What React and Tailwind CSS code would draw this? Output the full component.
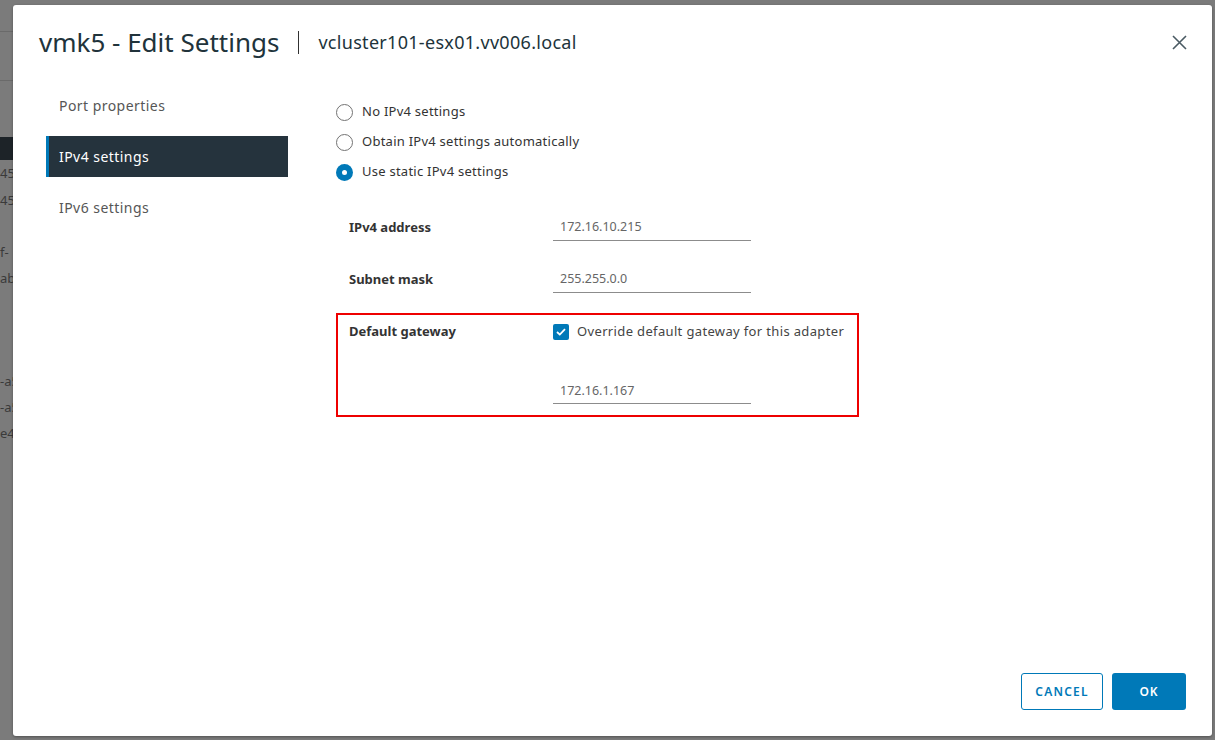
import { useState } from 'react';

const FONT = { fontFamily: '"Noto Sans", "Open Sans", Arial, sans-serif' };

const NAV = ['Port properties', 'IPv4 settings', 'IPv6 settings'];

const MODES = [
  { id: 'none', label: 'No IPv4 settings' },
  { id: 'dhcp', label: 'Obtain IPv4 settings automatically' },
  { id: 'static', label: 'Use static IPv4 settings' },
];

// rows of the host page that peek out from under the modal backdrop
const BEHIND = [
  { h: 'h-[31px]', text: '' },
  { h: 'h-[49px] border-t border-[#6a6a6a]', text: '' },
  { h: 'h-[57px] border-t border-[#6a6a6a]', text: '' },
  { h: 'h-[23px] bg-[#1d2328]', text: '' },
  { h: 'h-[27px]', text: '45' },
  { h: 'h-[27px]', text: '45' },
  { h: 'h-[26px]', text: '' },
  { h: 'h-[26px]', text: 'f-' },
  { h: 'h-[26px]', text: 'ab' },
  { h: 'h-[77px]', text: '' },
  { h: 'h-[26px]', text: '-a5' },
  { h: 'h-[26px]', text: '-a5' },
  { h: 'h-[26px]', text: 'e4' },
];

function Radio({ checked, label, onClick }) {
  return (
    <button type="button" onClick={onClick} className="flex items-center gap-[9px] h-[30px] text-left">
      {checked ? (
        <span className="w-[17px] h-[17px] rounded-full bg-[#0079b8] flex items-center justify-center">
          <span className="w-[5px] h-[5px] rounded-full bg-white" />
        </span>
      ) : (
        <span className="w-[17px] h-[17px] rounded-full border border-[#737373] bg-white" />
      )}
      <span className="text-[13px] tracking-[0.25px] text-[#333]">{label}</span>
    </button>
  );
}

function Field({ value }) {
  return (
    <div className="w-[198px] border-b border-[#8c8c8c] px-[7px] pb-[3px] text-[12.5px] text-[#666]">{value}</div>
  );
}

export default function App() {
  const [active, setActive] = useState(1);
  const [mode, setMode] = useState('static');
  const [override, setOverride] = useState(true);

  return (
    <div className="relative w-[1215px] h-[740px] overflow-hidden bg-[#7b7b7b]" style={FONT}>
      <div className="w-[13px] flex flex-col">
        {BEHIND.map((r, i) => (
          <div key={i} className={`${r.h} flex items-center whitespace-nowrap text-[13px] text-[#3a3a3a]`}>
            {r.text}
          </div>
        ))}
      </div>

      <div className="absolute left-[13px] top-[5px] w-[1199px] h-[731px] bg-white rounded-[3px] shadow-[0_1px_3px_rgba(0,0,0,0.35)] flex flex-col">
        <div className="flex items-center h-[77px] pl-[26px] pr-[25px] pb-[3px]">
          <h1 className="text-[26px] text-[#21333b] leading-none">vmk5 - Edit Settings</h1>
          <span className="mx-[19px] w-px h-[23px] bg-[#313131]" />
          <span className="text-[18px] tracking-[0.3px] text-[#21333b] leading-none">vcluster101-esx01.vv006.local</span>
          <button type="button" className="ml-auto text-[#4a5a63]">
            <svg width="15" height="15" viewBox="0 0 15 15" fill="none" stroke="currentColor" strokeWidth="1.6">
              <path d="M1 1L14 14M14 1L1 14" />
            </svg>
          </button>
        </div>

        <div className="flex flex-1">
          <nav className="w-[242px] ml-[33px] mt-[3px] flex flex-col">
            {NAV.map((n, i) =>
              i === active ? (
                <button key={n} type="button" className="h-[41px] my-[10px] border-l-[3px] border-[#0079b8] bg-[#25333d] text-white text-[14px] tracking-[0.45px] text-left pl-[10px]">
                  {n}
                </button>
              ) : (
                <button key={n} type="button" onClick={() => setActive(i)} className="h-[41px] text-[#565656] text-[14px] tracking-[0.45px] text-left pl-[13px]">
                  {n}
                </button>
              )
            )}
          </nav>

          <div className="ml-[48px] mt-[15px] flex flex-col">
            {MODES.map((m) => (
              <Radio key={m.id} label={m.label} checked={mode === m.id} onClick={() => setMode(m.id)} />
            ))}

            <div className="mt-[31px] flex items-start pl-[13px] h-[52px]">
              <div className="w-[204px] text-[13px] font-bold text-[#333]">IPv4 address</div>
              <Field value="172.16.10.215" />
            </div>
            <div className="flex items-start pl-[13px] h-[43px]">
              <div className="w-[204px] text-[13px] font-bold text-[#333]">Subnet mask</div>
              <Field value="255.255.0.0" />
            </div>

            <div className="w-[523px] h-[104px] border-2 border-[#ee0000] flex pl-[11px] pt-[7px]">
              <div className="w-[204px] text-[13px] font-bold text-[#333]">Default gateway</div>
              <div className="flex flex-col">
                <button type="button" onClick={() => setOverride(!override)} className="flex items-center gap-[8px] text-left">
                  <span className={`w-[16px] h-[16px] rounded-[2px] flex items-center justify-center ${override ? 'bg-[#0079b8]' : 'border border-[#737373]'}`}>
                    {override && (
                      <svg width="10" height="8" viewBox="0 0 10 8" fill="none" stroke="white" strokeWidth="1.8">
                        <path d="M1 4L3.8 6.6L9 1.2" />
                      </svg>
                    )}
                  </span>
                  <span className="text-[13px] tracking-[0.35px] text-[#444]">Override default gateway for this adapter</span>
                </button>
                <div className="mt-[40px]">
                  <Field value="172.16.1.167" />
                </div>
              </div>
            </div>
          </div>
        </div>

        <div className="flex justify-end gap-[9px] pr-[26px] pb-[26px]">
          <button type="button" className="w-[82px] h-[37px] rounded-[3px] border border-[#0079b8] text-[#0079b8] text-[12px] font-semibold tracking-[0.1em]">
            CANCEL
          </button>
          <button type="button" className="w-[74px] h-[37px] rounded-[3px] bg-[#0079b8] text-white text-[12px] font-semibold tracking-[0.08em]">
            OK
          </button>
        </div>
      </div>
    </div>
  );
}
